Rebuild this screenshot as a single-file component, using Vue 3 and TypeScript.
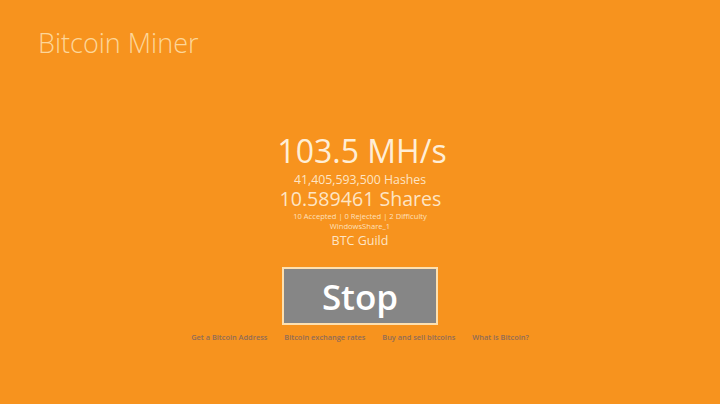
<script setup lang="ts">
const links: string[] = ['Get a Bitcoin Address', 'Bitcoin exchange rates', 'Buy and sell bitcoins', 'What is Bitcoin?']
</script>

<template>
  <main class="page">
    <h1 class="title">Bitcoin Miner</h1>
    <section class="stats">
      <div class="rate">103.5 MH/s</div>
      <div class="hashes">41,405,593,500 Hashes</div>
      <div class="shares">10.589461 Shares</div>
      <div class="small">10 Accepted | 0 Rejected | 2 Difficulty</div>
      <div class="small worker">WindowsShare_1</div>
      <div class="pool">BTC Guild</div>
      <button class="stop" type="button">Stop</button>
      <nav class="links">
        <a v-for="link in links" :key="link" class="link">{{ link }}</a>
      </nav>
    </section>
  </main>
</template>

<style>
html, body { margin: 0; background: #f7931e; }
</style>

<style scoped>
.page {
  width: 720px;
  height: 404px;
  overflow: hidden;
  box-sizing: border-box;
  padding-top: 27px;
  background: #f7931e;
  color: #ffeed6;
  font-family: "Open Sans", "Noto Sans", sans-serif;
}
.title {
  margin: 0 0 0 38px;
  font-size: 27px;
  line-height: 32px;
  font-weight: 300;
  color: #fdd699;
}
.stats {
  margin-top: 73px;
  display: flex;
  flex-direction: column;
  align-items: center;
}
.rate { font-size: 32px; line-height: 38px; margin-left: 4px; }
.hashes { font-size: 12.3px; line-height: 15px; margin-top: 2px; opacity: 0.9; }
.shares { font-size: 19.6px; line-height: 24px; margin-left: 1px; opacity: 0.9; }
.small { font-size: 7.6px; line-height: 10px; opacity: 0.85; }
.pool { font-size: 12.5px; line-height: 15px; margin-top: 2px; opacity: 0.9; }
.stop {
  margin-top: 19px;
  width: 156px;
  height: 58px;
  box-sizing: border-box;
  border: 2px solid #fde0b0;
  background: #868686;
  color: #fff;
  font-family: inherit;
  font-size: 35px;
  font-weight: 600;
  padding: 0;
}
.links {
  margin-top: 6px;
  display: flex;
  gap: 17px;
}
.link { font-size: 7.4px; line-height: 12px; font-weight: 600; color: #8f6c58; }
</style>
